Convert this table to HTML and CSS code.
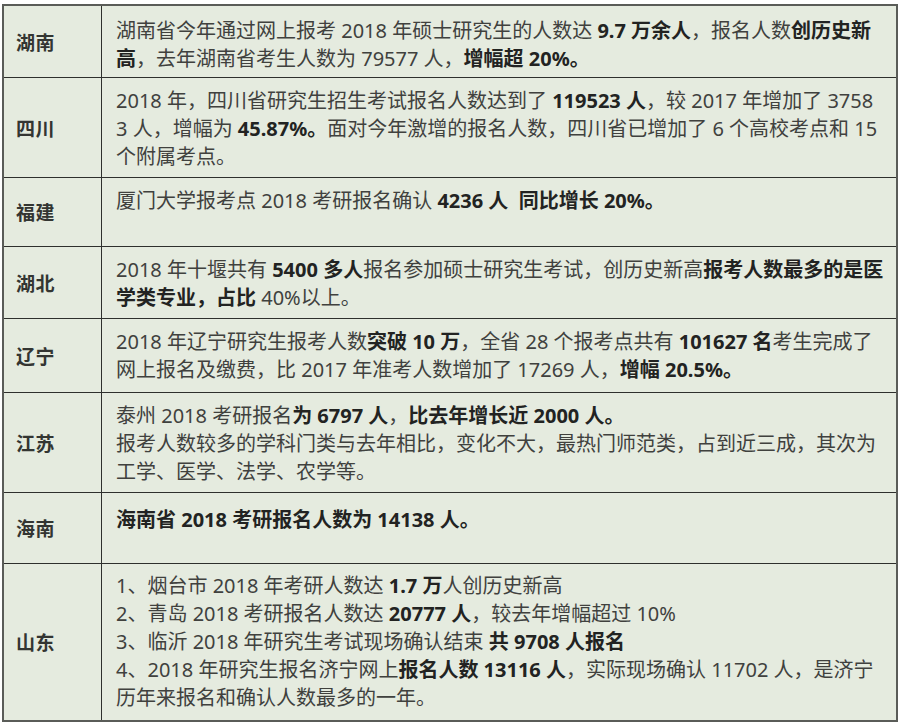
FILE: index.html
```html
<!DOCTYPE html>
<html lang="zh-CN">
<head>
<meta charset="utf-8">
<title>2018 考研报名人数</title>
<link rel="stylesheet" href="styles.css">
</head>
<body>
<table class="stats">
  <tr class="r1">
    <th>湖南</th>
    <td>湖南省今年通过网上报考 2018 年硕士研究生的人数达 <b>9.7 万余人</b>，报名人数<b>创历史新高</b>，去年湖南省考生人数为 79577 人，<b>增幅超 20%。</b></td>
  </tr>
  <tr>
    <th>四川</th>
    <td>2018 年，四川省研究生招生考试报名人数达到了 <b>119523 人</b>，较 2017 年增加了 37583 人，增幅为 <b>45.87%。</b>面对今年激增的报名人数，四川省已增加了 6 个高校考点和 15 个附属考点。</td>
  </tr>
  <tr class="r-single">
    <th>福建</th>
    <td>厦门大学报考点 2018 考研报名确认 <b>4236 人&nbsp; 同比增长 20%。</b></td>
  </tr>
  <tr>
    <th>湖北</th>
    <td>2018 年十堰共有 <b>5400 多人</b>报名参加硕士研究生考试，创历史新高<b>报考人数最多的是医学类专业，占比</b> 40%以上。</td>
  </tr>
  <tr class="r-tall">
    <th>辽宁</th>
    <td>2018 年辽宁研究生报考人数<b>突破 10 万</b>，全省 28 个报考点共有 <b>101627 名</b>考生完成了网上报名及缴费，比 2017 年准考人数增加了 17269 人，<b>增幅 20.5%。</b></td>
  </tr>
  <tr>
    <th>江苏</th>
    <td>泰州 2018 考研报名<b>为 6797 人</b>，<b>比去年增长近 2000 人。</b><br>报考人数较多的学科门类与去年相比，变化不大，最热门师范类，占到近三成，其次为工学、医学、法学、农学等。</td>
  </tr>
  <tr class="r-hn">
    <th>海南</th>
    <td><b>海南省 2018 考研报名人数为 14138 人。</b></td>
  </tr>
  <tr class="r-last">
    <th>山东</th>
    <td>1、烟台市 2018 年考研人数达 <b>1.7 万</b>人创历史新高<br>2、青岛 2018 考研报名人数达 <b>20777 人</b>，较去年增幅超过 10%<br>3、临沂 2018 年研究生考试现场确认结束 <b>共 9708 人报名</b><br>4、2018 年研究生报名济宁网上<b>报名人数 13116 人</b>，实际现场确认 11702 人，是济宁历年来报名和确认人数最多的一年。</td>
  </tr>
</table>
</body>
</html>
```

FILE: styles.css
```css
html, body {
  margin: 0;
  padding: 0;
  background: #ffffff;
}
body {
  padding: 4px 2px 0 2px;
  font-family: "Noto Sans", "Noto Sans CJK SC", sans-serif;
  color: #40413e;
}
.stats {
  width: 896px;
  border-collapse: collapse;
  background: #e5ebdf;
  border: 2px solid #5a5c58;
}
.stats th,
.stats td {
  border: 1px solid #2e302d;
  vertical-align: top;
  text-align: left;
}
.stats th {
  width: 85px;
  padding: 0 0 0 12px;
  vertical-align: middle;
  font-size: 19px;
  font-weight: 700;
  color: #333532;
  letter-spacing: 0.5px;
}
.stats td {
  padding: 9px 12px 6px 14px;
  font-size: 20px;
  line-height: 28px;
  word-break: break-all;
}
.stats b {
  font-weight: 700;
  color: #222322;
}
.r1 td {
  padding-top: 11px;
  padding-bottom: 4px;
}
.r-tall td {
  padding-bottom: 8px;
}
.r-single td {
  height: 53px;
}
.r-hn td {
  height: 51px;
  padding-top: 13px;
}
.r-last td {
  padding-top: 8px;
  padding-bottom: 8px;
}
```
